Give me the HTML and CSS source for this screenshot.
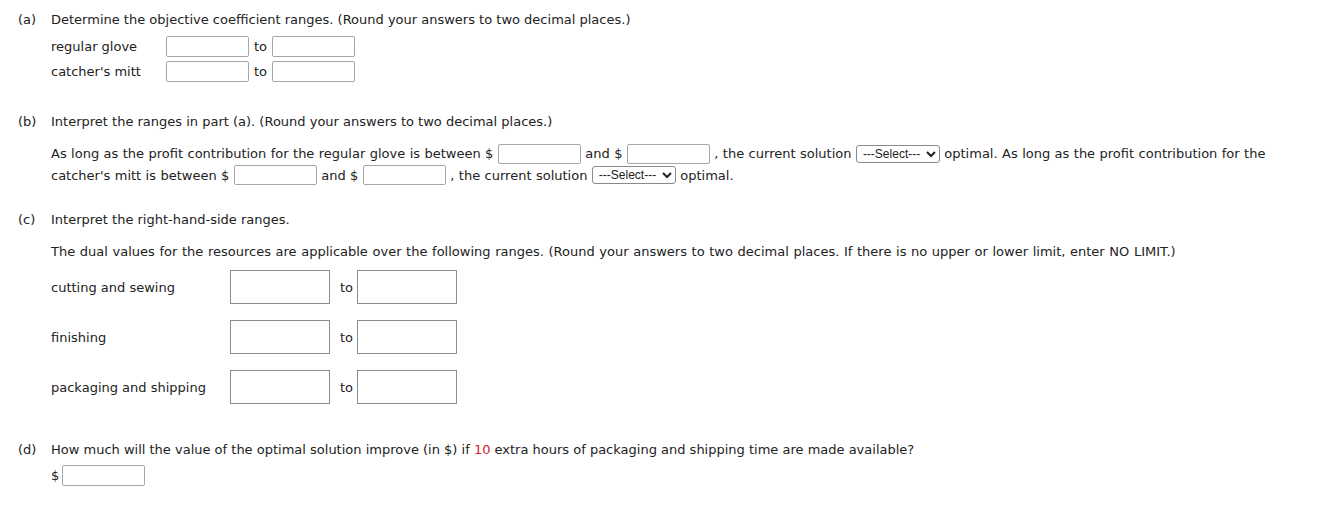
FILE: index.html
```html
<!DOCTYPE html>
<html>
<head>
<meta charset="utf-8">
<link rel="stylesheet" href="styles.css">
</head>
<body>
<div class="page">
  <section class="part part-a">
    <div class="tag">(a)</div>
    <div class="body">
      <p class="q">Determine the objective coefficient ranges. (Round your answers to two decimal places.)</p>
      <div class="rows-a">
        <div class="row-a"><span class="lbl-a">regular glove</span><input class="inp sm" type="text"><span class="to">to</span><input class="inp sm" type="text"></div>
        <div class="row-a"><span class="lbl-a">catcher's mitt</span><input class="inp sm" type="text"><span class="to">to</span><input class="inp sm" type="text"></div>
      </div>
    </div>
  </section>

  <section class="part part-b">
    <div class="tag">(b)</div>
    <div class="body">
      <p class="q">Interpret the ranges in part (a). (Round your answers to two decimal places.)</p>
      <p class="para">As long as the profit contribution for the regular glove is between $ <input class="inp il" type="text"> and $ <input class="inp il" type="text"> , the current solution <select class="sel"><option>---Select---</option></select> optimal. As long as the profit contribution for the catcher's mitt is between $ <input class="inp il" type="text"> and $ <input class="inp il" type="text"> , the current solution <select class="sel"><option>---Select---</option></select> optimal.</p>
    </div>
  </section>

  <section class="part part-c">
    <div class="tag">(c)</div>
    <div class="body">
      <p class="q">Interpret the right-hand-side ranges.</p>
      <p class="q2">The dual values for the resources are applicable over the following ranges. (Round your answers to two decimal places. If there is no upper or lower limit, enter NO LIMIT.)</p>
      <div class="rows-c">
        <div class="row-c"><span class="lbl-c">cutting and sewing</span><input class="inp big" type="text"><span class="to-c">to</span><input class="inp big" type="text"></div>
        <div class="row-c"><span class="lbl-c">finishing</span><input class="inp big" type="text"><span class="to-c">to</span><input class="inp big" type="text"></div>
        <div class="row-c"><span class="lbl-c">packaging and shipping</span><input class="inp big" type="text"><span class="to-c">to</span><input class="inp big" type="text"></div>
      </div>
    </div>
  </section>

  <section class="part part-d">
    <div class="tag">(d)</div>
    <div class="body">
      <p class="q">How much will the value of the optimal solution improve (in $) if <span class="red">10</span> extra hours of packaging and shipping time are made available?</p>
      <div class="row-d"><span class="dollar">$</span><input class="inp sm" type="text"></div>
    </div>
  </section>
</div>
</body>
</html>
```

FILE: styles.css
```css
html, body {
  margin: 0;
  padding: 0;
  background: #ffffff;
}
body {
  font-family: "DejaVu Sans", Verdana, sans-serif;
  font-size: 13px;
  color: #222222;
}
.page {
  padding: 12px 0 0 18px;
}
p {
  margin: 0;
}
.part {
  display: flex;
}
.tag {
  width: 33px;
  flex: none;
  line-height: 16px;
}
.body {
  flex: 1;
}
.q {
  line-height: 16px;
}
.inp {
  box-sizing: border-box;
  margin: 0;
  padding: 0 4px;
  background: #fff;
  border: 1px solid #a6a6a6;
  font: inherit;
  outline: none;
}
.inp.sm {
  width: 83px;
  height: 21px;
  border-radius: 2px;
}
.rows-a {
  margin-top: 8px;
  display: flex;
  flex-direction: column;
  gap: 4px;
}
.row-a {
  display: flex;
  align-items: center;
  height: 21px;
}
.lbl-a {
  width: 115px;
  flex: none;
}
.to {
  width: 23px;
  padding-left: 5px;
  box-sizing: border-box;
}
.part-b {
  margin-top: 32px;
}
.para {
  margin-top: 13px;
  line-height: 21px;
  width: 1230px;
  word-spacing: 0.3px;
}
.inp.il {
  width: 83px;
  height: 20px;
  border-radius: 2px;
  vertical-align: middle;
  position: relative;
  top: -1px;
}
.sel {
  box-sizing: border-box;
  width: 84px;
  height: 18px;
  font-family: "Liberation Sans", Arial, sans-serif;
  font-size: 12px;
  color: #222;
  border: 1px solid #8a8a8a;
  border-radius: 3px;
  background: #fff;
  padding: 0 0 0 2px;
  margin: 0;
  vertical-align: middle;
  position: relative;
  top: -1px;
}
.part-c {
  margin-top: 26px;
}
.q2 {
  margin-top: 16px;
  line-height: 16px;
  word-spacing: 0.5px;
}
.rows-c {
  margin-top: 10px;
  display: flex;
  flex-direction: column;
  gap: 16px;
}
.row-c {
  display: flex;
  align-items: center;
  height: 34px;
}
.lbl-c {
  width: 179px;
  flex: none;
}
.inp.big {
  width: 100px;
  height: 34px;
  border-color: #8c8c8c;
  border-radius: 0;
}
.to-c {
  width: 27px;
  padding-left: 10px;
  box-sizing: border-box;
}
.part-d {
  margin-top: 38px;
}
.red {
  color: #d1232a;
}
.row-d {
  margin-top: 7px;
  display: flex;
  align-items: center;
  height: 21px;
}
.dollar {
  width: 11px;
  flex: none;
}
```
